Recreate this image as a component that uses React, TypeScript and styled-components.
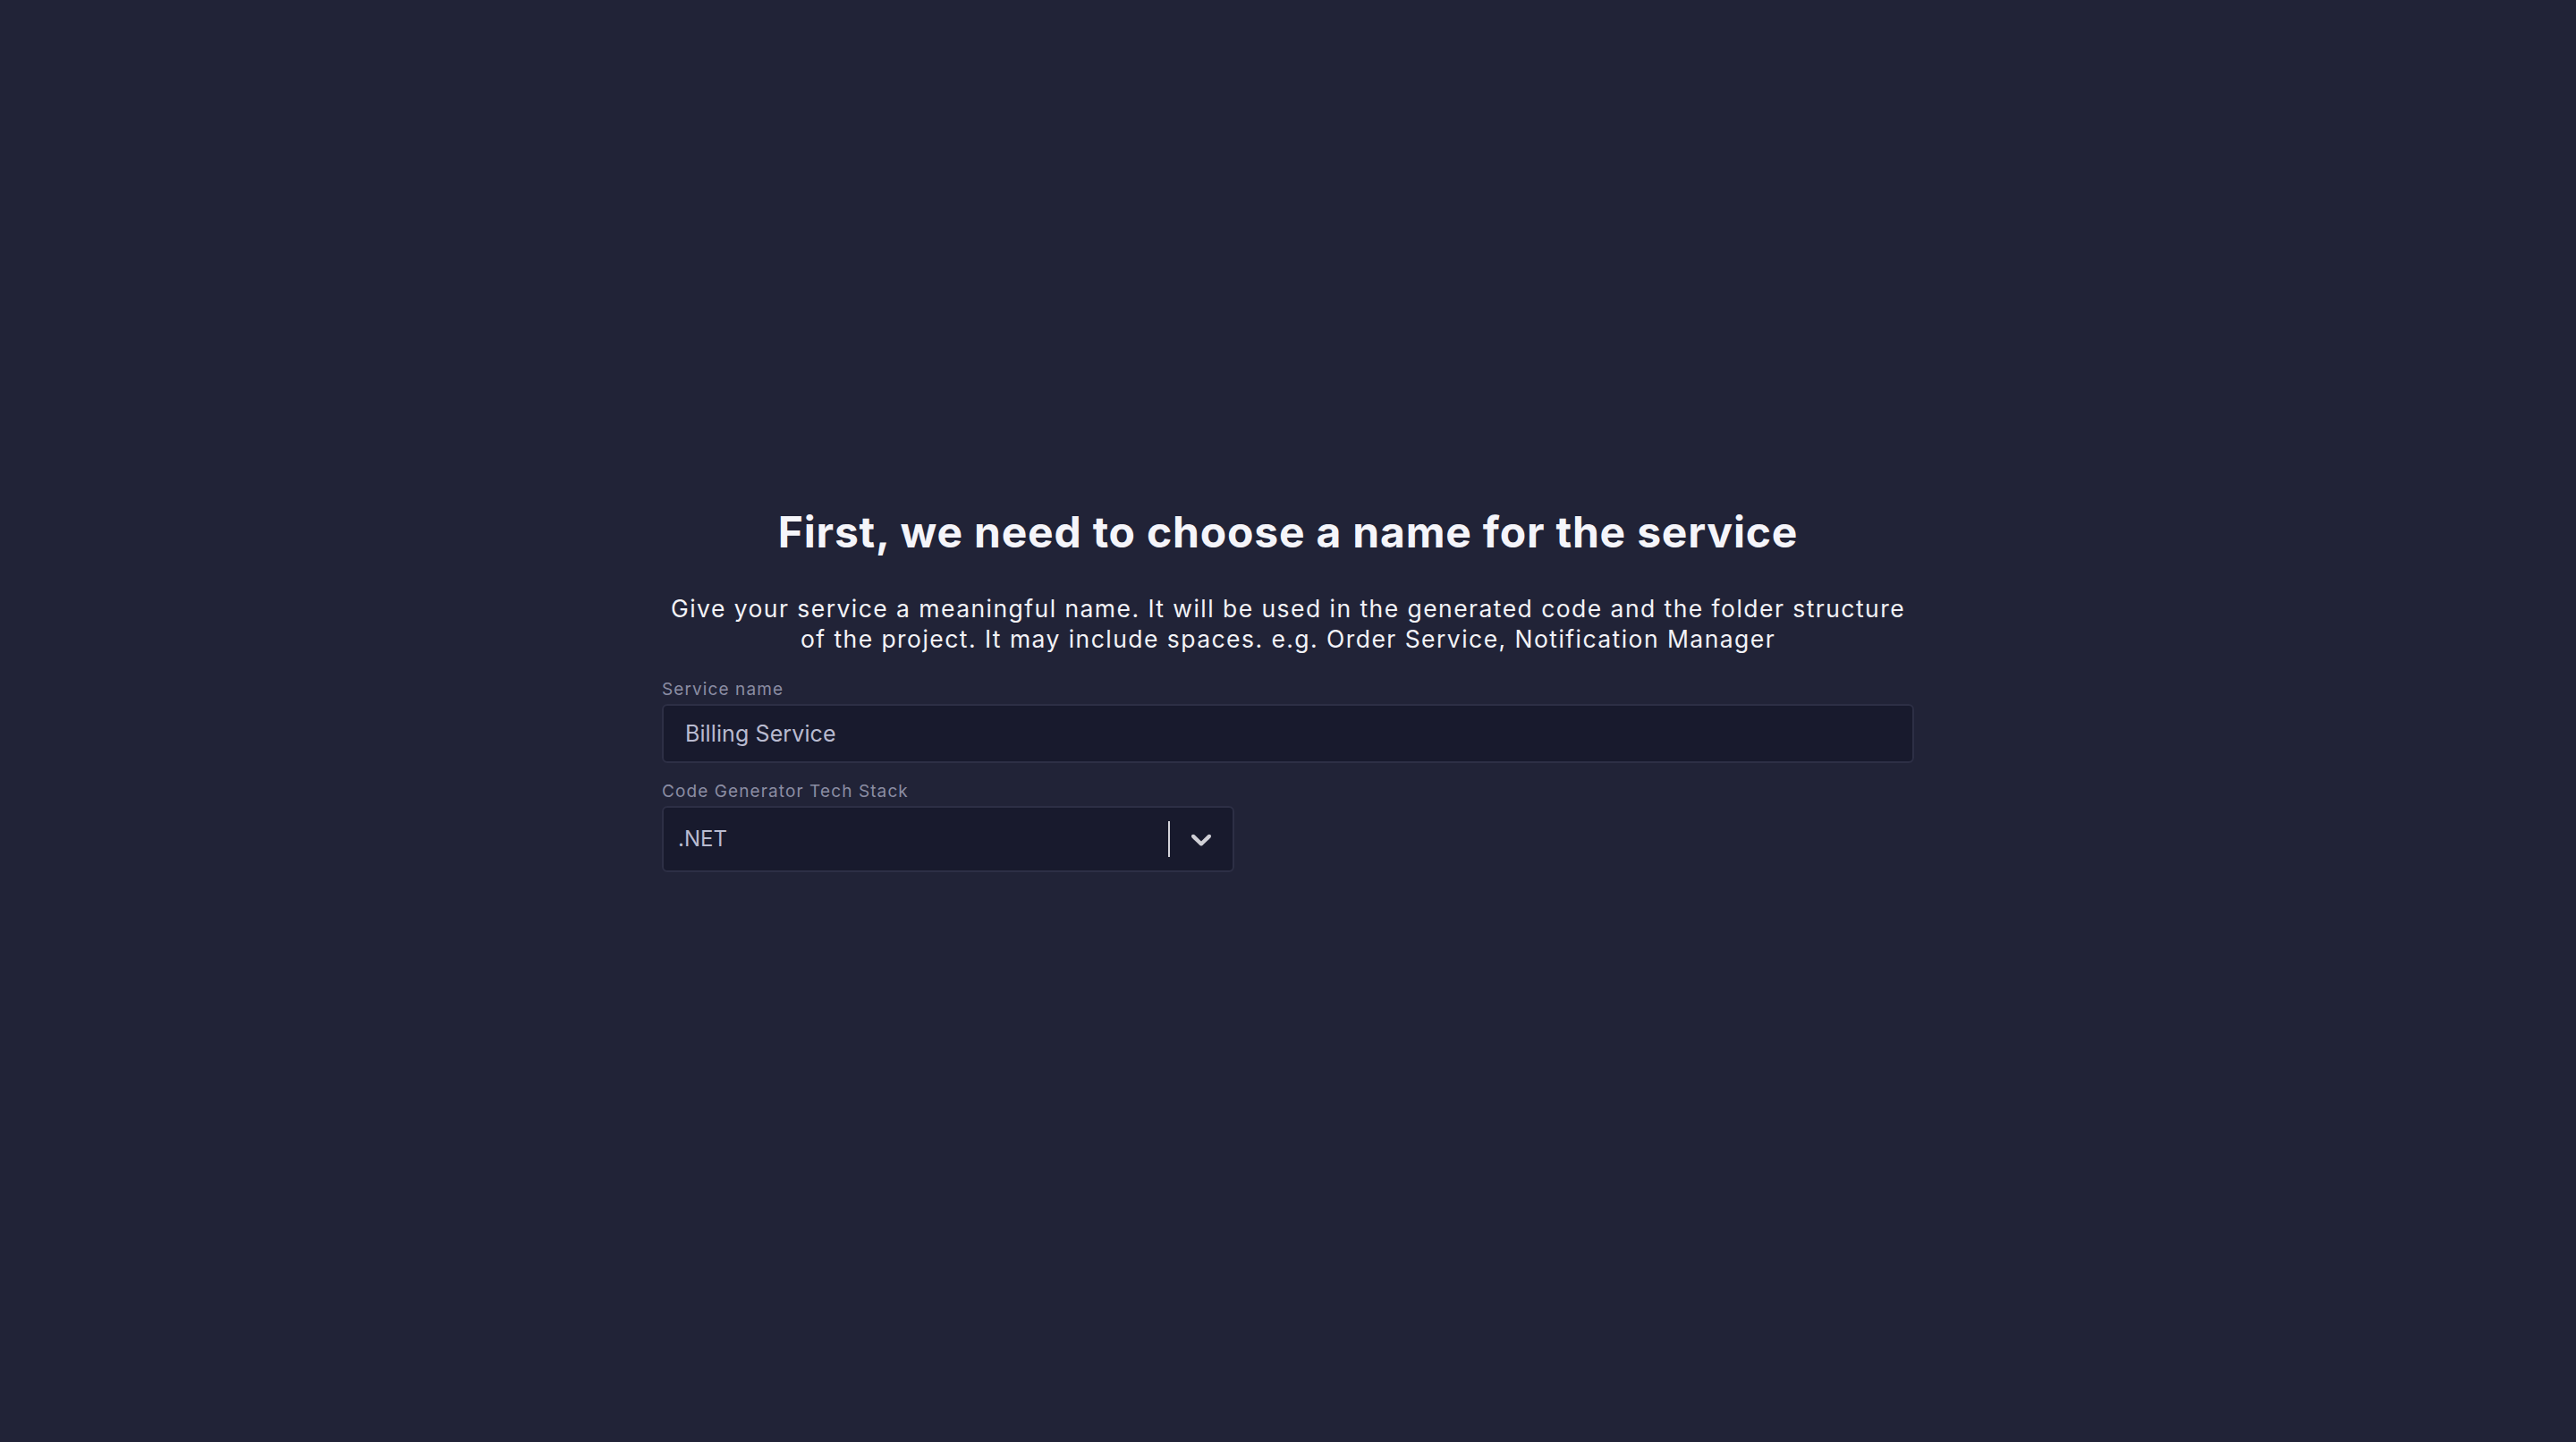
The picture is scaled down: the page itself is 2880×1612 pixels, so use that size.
import React from "react";
import styled, { createGlobalStyle } from "styled-components";

const GlobalStyle = createGlobalStyle`
  html, body {
    margin: 0;
    padding: 0;
    background: #212337;
  }
  body {
    font-family: Inter, "Noto Sans", "Liberation Sans", sans-serif;
  }
  * { box-sizing: border-box; }
`;

const Page = styled.main`
  min-height: 100vh;
  background: #212337;
  display: flex;
  justify-content: center;
  padding-top: 566px;
`;

const Column = styled.section`
  width: 1400px;
  display: flex;
  flex-direction: column;
`;

const Title = styled.h1`
  margin: 0;
  text-align: center;
  font-family: Inter, "Noto Sans", sans-serif;
  font-weight: 700;
  font-size: 48px;
  line-height: 57.6px;
  color: #f5f5fa;
  letter-spacing: 0.8px;
`;

const Subtitle = styled.p`
  margin: 39px 0 0;
  text-align: center;
  font-family: Inter, "Noto Sans", sans-serif;
  font-weight: 400;
  font-size: 26.5px;
  line-height: 34px;
  letter-spacing: 1.45px;
  color: #f3f3f7;
`;

const Field = styled.div<{ $first?: boolean }>`
  display: flex;
  flex-direction: column;
  gap: 4px;
  margin-top: ${(p) => (p.$first ? "28px" : "20px")};
`;

const Label = styled.label`
  font-family: Inter, "Noto Sans", sans-serif;
  font-size: 19px;
  line-height: 24px;
  letter-spacing: 1.1px;
  color: #8b8da3;
`;

const TextInput = styled.input`
  height: 66px;
  width: 100%;
  padding: 0 24px;
  border: 2px solid #2d2f45;
  border-radius: 6px;
  background: #181a2d;
  color: #b9bbd0;
  font-family: Inter, "Noto Sans", sans-serif;
  font-size: 25px;
  letter-spacing: 0.1px;
  outline: none;
`;

const SelectBox = styled.div`
  width: 640px;
  height: 74px;
  display: flex;
  align-items: center;
  border: 2px solid #2d2f45;
  border-radius: 6px;
  background: #181a2d;
`;

const SelectValue = styled.div`
  flex: 1;
  padding-left: 16px;
  font-family: Inter, "Noto Sans", sans-serif;
  font-size: 24px;
  color: #b9bbd0;
`;

const Separator = styled.span`
  width: 2px;
  height: 40px;
  background: #d4d4da;
`;

const Indicator = styled.div`
  padding: 0 16px;
  display: flex;
  align-items: center;
  color: #d0d0d6;
`;

const Chevron = () => (
  <svg width="38" height="38" viewBox="0 0 20 20" fill="currentColor" aria-hidden="true">
    <path d="M4.516 7.548c0.436-0.446 1.043-0.481 1.576 0l3.908 3.747 3.908-3.747c0.533-0.481 1.141-0.446 1.574 0 0.436 0.445 0.408 1.197 0 1.615-0.406 0.418-4.695 4.502-4.695 4.502-0.217 0.223-0.502 0.335-0.787 0.335s-0.57-0.112-0.789-0.335c0 0-4.287-4.084-4.695-4.502s-0.436-1.170 0-1.615z" />
  </svg>
);

export default function App() {
  return (
    <>
      <GlobalStyle />
      <Page>
        <Column>
          <Title>First, we need to choose a name for the service</Title>
          <Subtitle>
            Give your service a meaningful name. It will be used in the generated code and the folder structure
            <br />
            of the project. It may include spaces. e.g. Order Service, Notification Manager
          </Subtitle>
          <Field $first>
            <Label htmlFor="service-name">Service name</Label>
            <TextInput id="service-name" defaultValue="Billing Service" />
          </Field>
          <Field>
            <Label>Code Generator Tech Stack</Label>
            <SelectBox>
              <SelectValue>.NET</SelectValue>
              <Separator />
              <Indicator>
                <Chevron />
              </Indicator>
            </SelectBox>
          </Field>
        </Column>
      </Page>
    </>
  );
}
